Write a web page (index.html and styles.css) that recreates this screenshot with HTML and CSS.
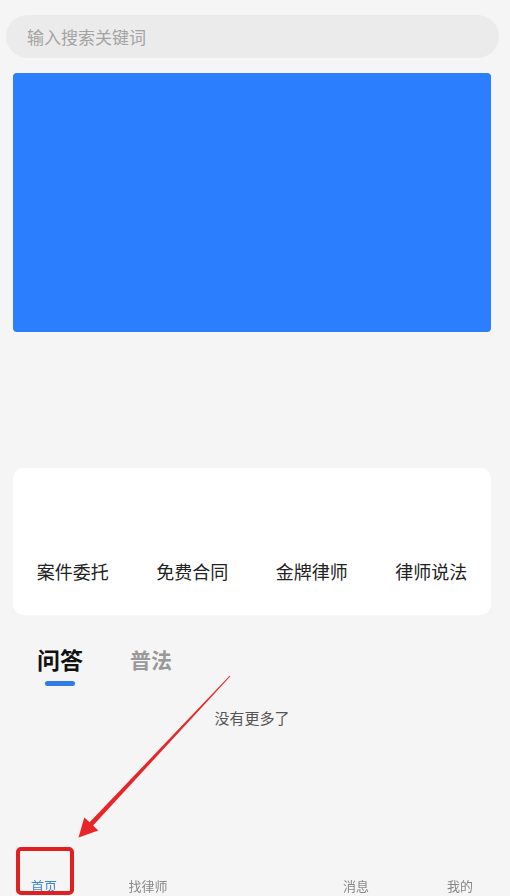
FILE: index.html
```html
<!DOCTYPE html>
<html lang="zh-CN">
<head>
    <meta charset="UTF-8">
    <title>首页</title>
    <link rel="stylesheet" href="styles.css">
</head>
<body>
<div class="page">
    <div class="search">输入搜索关键词</div>
    <div class="banner"></div>

    <div class="menu">
        <div class="menu-item">案件委托</div>
        <div class="menu-item">免费合同</div>
        <div class="menu-item">金牌律师</div>
        <div class="menu-item">律师说法</div>
    </div>

    <div class="tabs">
        <div class="tab active">问答<span class="bar"></span></div>
        <div class="tab">普法</div>
    </div>
    <div class="nomore">没有更多了</div>
</div>

<div class="tabbar">
    <div class="tabbar-item on">首页</div>
    <div class="tabbar-item">找律师</div>
    <div class="tabbar-item"></div>
    <div class="tabbar-item">消息</div>
    <div class="tabbar-item">我的</div>
</div>

<!-- 标注：箭头和红框 -->
<svg class="mark" width="510" height="896" viewBox="0 0 510 896">
    <polygon fill="#e8262a" points="230.4,676.3 229.6,675.7 89.6,822.3 84.3,817.4 78.5,837.5 98.3,830.4 93.1,825.6"/>
</svg>
<div class="mark-box"></div>
</body>
</html>
```

FILE: styles.css
```css
*{
    margin: 0;
    padding: 0;
    box-sizing: border-box;
}
html,body{
    background-color: #f5f5f5;
    font-family: "Noto Sans CJK SC", "Noto Sans", sans-serif;
}
.page{
    padding-top: 15px;
}
.search{
    margin-left: 6px;
    width: 493px;
    height: 43px;
    line-height: 43px;
    padding-left: 21px;
    border-radius: 22px;
    background-color: #ebebeb;
    color: #a3a3a3;
    font-size: 17px;
}
.banner{
    margin: 15px 0 0 13px;
    width: 478px;
    height: 259px;
    border-radius: 4px;
    background-color: #2b7fff;
}
.menu{
    display: grid;
    grid-template-columns: repeat(4, 1fr);
    margin: 136px 0 0 13px;
    width: 478px;
    height: 147px;
    padding-top: 90px;
    border-radius: 10px;
    background-color: #fff;
}
.menu-item{
    text-align: center;
    font-size: 18px;
    line-height: 26px;
    color: #222;
}
.tabs{
    display: flex;
    align-items: flex-start;
    gap: 47px;
    margin-top: 29px;
    padding-left: 37px;
}
.tab{
    position: relative;
    font-size: 21px;
    font-weight: bold;
    line-height: 30px;
    color: #999;
}
.tab.active{
    font-size: 23px;
    color: #111;
}
.tab .bar{
    display: block;
    width: 30px;
    height: 5px;
    margin: 7px auto 0;
    border-radius: 3px;
    background-color: #2f7be8;
}
.nomore{
    margin-top: 21px;
    padding-right: 6px;
    text-align: center;
    font-size: 15px;
    line-height: 22px;
    color: #555;
}
.tabbar{
    position: fixed;
    left: -8px;
    bottom: 0;
    display: grid;
    grid-template-columns: repeat(5, 104px);
    height: 20px;
}
.tabbar-item{
    text-align: center;
    font-size: 13px;
    line-height: 20px;
    color: #888;
}
.tabbar-item.on{
    color: #3d83e0;
}
.mark{
    position: absolute;
    left: 0;
    top: 0;
    pointer-events: none;
}
.mark-box{
    position: absolute;
    left: 16px;
    top: 847px;
    width: 58px;
    height: 48px;
    border: 4px solid #e02020;
    border-radius: 5px;
}
```
